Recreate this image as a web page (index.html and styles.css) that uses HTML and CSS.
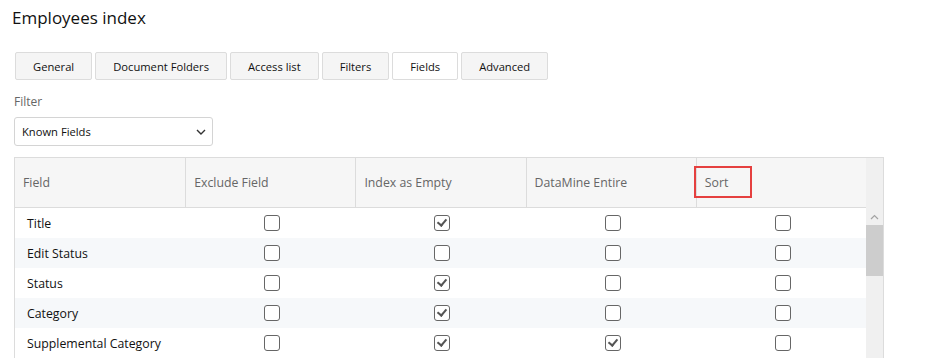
FILE: index.html
```html
<!DOCTYPE html>
<html lang="en">
<head>
  <meta charset="UTF-8">
  <meta name="viewport" content="width=device-width, initial-scale=1.0">
  <title>Employees index</title>
  <link rel="stylesheet" href="styles.css">
</head>
<body>

  <!-- Page title -->
  <h1 class="page-title">Employees index</h1>

  <!-- Tabs -->
  <div class="tabs">
    <button class="tab">General</button>
    <button class="tab">Document Folders</button>
    <button class="tab">Access list</button>
    <button class="tab">Filters</button>
    <button class="tab active">Fields</button>
    <button class="tab">Advanced</button>
  </div>

  <!-- Filter -->
  <label class="filter-label">Filter</label>
  <div class="select">
    <span>Known Fields</span>
    <svg class="chevron" width="10" height="6" viewBox="0 0 10 6"><path d="M1 1l4 4 4-4" fill="none" stroke="#333" stroke-width="1.4"/></svg>
  </div>

  <!-- Fields grid -->
  <div class="grid">
    <div class="grid-main">
      <div class="grid-head">
        <div class="th">Field</div>
        <div class="th">Exclude Field</div>
        <div class="th">Index as Empty</div>
        <div class="th">DataMine Entire</div>
        <div class="th sort">Sort<span class="highlight"></span></div>
      </div>

      <div class="grid-body">
        <div class="tr">
          <div class="td name">Title</div>
          <div class="td"><span class="cb"></span></div>
          <div class="td"><span class="cb checked"></span></div>
          <div class="td"><span class="cb"></span></div>
          <div class="td"><span class="cb"></span></div>
        </div>
        <div class="tr">
          <div class="td name">Edit Status</div>
          <div class="td"><span class="cb"></span></div>
          <div class="td"><span class="cb"></span></div>
          <div class="td"><span class="cb"></span></div>
          <div class="td"><span class="cb"></span></div>
        </div>
        <div class="tr">
          <div class="td name">Status</div>
          <div class="td"><span class="cb"></span></div>
          <div class="td"><span class="cb checked"></span></div>
          <div class="td"><span class="cb"></span></div>
          <div class="td"><span class="cb"></span></div>
        </div>
        <div class="tr">
          <div class="td name">Category</div>
          <div class="td"><span class="cb"></span></div>
          <div class="td"><span class="cb checked"></span></div>
          <div class="td"><span class="cb"></span></div>
          <div class="td"><span class="cb"></span></div>
        </div>
        <div class="tr">
          <div class="td name">Supplemental Category</div>
          <div class="td"><span class="cb"></span></div>
          <div class="td"><span class="cb checked"></span></div>
          <div class="td"><span class="cb checked"></span></div>
          <div class="td"><span class="cb"></span></div>
        </div>
      </div>
    </div>

    <!-- Scrollbar -->
    <div class="scrollbar">
      <div class="scroll-gutter"></div>
      <div class="scroll-up">
        <svg width="9" height="6" viewBox="0 0 9 6"><path d="M1 5l3.5-3.5L8 5" fill="none" stroke="#a3a3a3" stroke-width="1.2"/></svg>
      </div>
      <div class="scroll-thumb"></div>
    </div>
  </div>

</body>
</html>
```

FILE: styles.css
```css
body {
  margin: 0;
  padding: 0 0 0 14px;
  font-family: 'Open Sans', 'Noto Sans', Arial, sans-serif;
  font-size: 12px;
  color: #222;
  background-color: #fff;
  overflow: hidden;
}

.page-title {
  font-size: 17px;
  font-weight: normal;
  line-height: 24px;
  margin: 6px 0 0 -2px;
  color: #111;
}

/* Tabs */
.tabs {
  display: flex;
  gap: 3px;
  margin: 22px 0 0 1px;
}

.tab {
  height: 28px;
  padding: 0 17px;
  font-family: inherit;
  font-size: 11.2px;
  color: #111;
  background-color: #f5f5f5;
  border: 1px solid #dcdcdc;
  border-radius: 2px;
}

.tab.active {
  background-color: #fff;
}

/* Filter */
.filter-label {
  display: block;
  margin: 14px 0 7px;
  line-height: 16px;
  font-size: 12px;
  color: #666;
}

.select {
  width: 199px;
  height: 29px;
  box-sizing: border-box;
  display: flex;
  align-items: center;
  justify-content: space-between;
  padding: 0 6px 0 7px;
  border: 1px solid #d4d4d4;
  border-radius: 3px;
  font-size: 11.2px;
  color: #111;
}

.chevron {
  margin-top: 1px;
}

/* Grid */
.grid {
  display: flex;
  width: 870px;
  margin-top: 11px;
  border: 1px solid #dcdcdc;
  border-bottom: none;
  box-sizing: border-box;
}

.grid-main {
  flex: 1;
}

.grid-head,
.tr {
  display: grid;
  grid-template-columns: repeat(5, 1fr);
}

.grid-head {
  height: 50px;
  background-color: #f6f6f6;
  border-bottom: 1px solid #dcdcdc;
  box-sizing: border-box;
}

.th {
  display: flex;
  align-items: center;
  padding-left: 8px;
  color: #666;
  font-size: 12.3px;
  border-left: 1px solid #dcdcdc;
  position: relative;
}

.th:first-child {
  border-left: none;
}

.highlight {
  position: absolute;
  left: -3px;
  top: 8px;
  width: 58px;
  height: 32px;
  box-sizing: border-box;
  border: 2px solid #e5403f;
}

.tr {
  height: 30px;
}

.tr:nth-child(even) {
  background-color: #f6f8fa;
}

.td {
  display: flex;
  align-items: center;
  justify-content: center;
  padding-left: 4px;
}

.td.name {
  justify-content: flex-start;
  padding-left: 12px;
  font-size: 12.3px;
  color: #111;
}

/* Checkboxes */
.cb {
  width: 16px;
  height: 16px;
  box-sizing: border-box;
  border: 1.8px solid #666;
  border-radius: 3px;
  background-color: #fff;
  position: relative;
}

.cb.checked::after {
  content: "";
  position: absolute;
  left: 4px;
  top: 1px;
  width: 4px;
  height: 7px;
  border: solid #555;
  border-width: 0 2.6px 2.6px 0;
  transform: rotate(40deg);
}

/* Scrollbar */
.scrollbar {
  width: 17px;
  display: flex;
  flex-direction: column;
  background-color: #f0f0f0;
}

.scroll-gutter {
  height: 50px;
}

.scroll-up {
  height: 17px;
  display: flex;
  align-items: center;
  justify-content: center;
}

.scroll-thumb {
  height: 51px;
  background-color: #cdcdcd;
}
```
